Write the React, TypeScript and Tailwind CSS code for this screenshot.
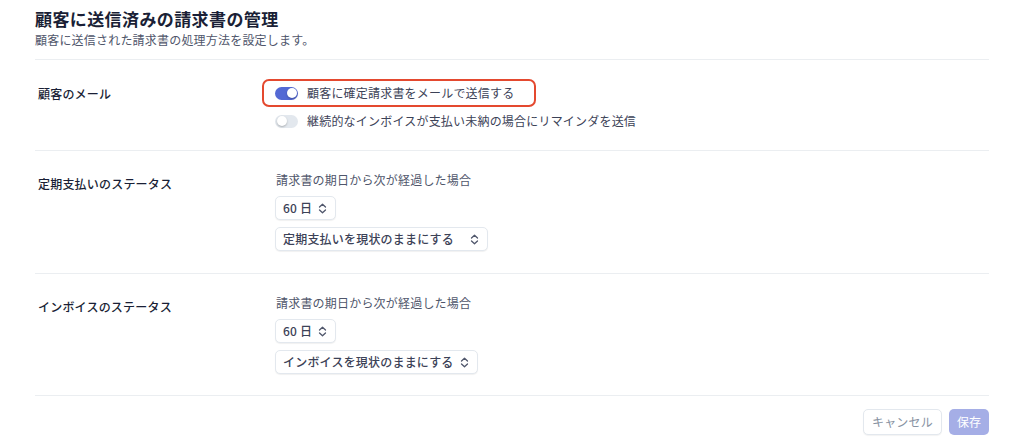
import React from "react";

const font = { fontFamily: '"Noto Sans CJK JP", "Noto Sans", sans-serif' };

function UpDown() {
  return (
    <svg width="9" height="11" viewBox="0 0 9 11" fill="none" className="shrink-0">
      <path d="M1.5 4 L4.5 1.2 L7.5 4" stroke="#4f566b" strokeWidth="1.3" strokeLinecap="round" strokeLinejoin="round" />
      <path d="M1.5 7 L4.5 9.8 L7.5 7" stroke="#4f566b" strokeWidth="1.3" strokeLinecap="round" strokeLinejoin="round" />
    </svg>
  );
}

function Select({ label, wide }: { label: string; wide?: string }) {
  return (
    <div
      className={`flex h-[24px] items-center justify-between gap-[6px] rounded-[5px] border border-[#e3e8ee] bg-white pl-[7px] pr-[8px] text-[12px] font-medium tracking-[0.2px] text-[#3c4257] shadow-[0_1px_1px_rgba(0,0,0,0.06)] ${
        wide ? wide : "w-fit"
      }`}
    >
      <span>{label}</span>
      <UpDown />
    </div>
  );
}

function Toggle({ on }: { on: boolean }) {
  return (
    <div
      className={`relative h-[13px] w-[23px] shrink-0 rounded-full ${
        on ? "bg-[#5469d4]" : "bg-[#e3e8ee]"
      }`}
    >
      <div
        className={`absolute top-[1.5px] h-[10px] w-[10px] rounded-full bg-white shadow-[0_1px_2px_rgba(0,0,0,0.25)] ${
          on ? "right-[1.5px]" : "left-[1.5px]"
        }`}
      />
    </div>
  );
}

function StatusRow({
  label,
  action,
  wide,
  pad,
}: {
  label: string;
  action: string;
  wide?: string;
  pad: string;
}) {
  return (
    <div className={`flex border-b border-[#ebeef1] ${pad}`}>
      <div className="w-[240px] pl-[3px] pt-[3px] text-[12px] font-medium tracking-[0.2px] text-[#1a1f36]">{label}</div>
      <div className="flex flex-col">
        <div className="pl-[1px] text-[12px] leading-[16px] tracking-[0.2px] text-[#4f566b]">請求書の期日から次が経過した場合</div>
        <div className="mt-[8px]">
          <Select label="60 日" />
        </div>
        <div className="mt-[7px]">
          <Select label={action} wide={wide} />
        </div>
      </div>
    </div>
  );
}

export default function App() {
  return (
    <div className="min-h-[446px] bg-white px-[35px] pt-[7px]" style={font}>
      <div className="border-b border-[#ebeef1] pb-[10px]">
        <h1 className="text-[17px] font-bold leading-[24px] tracking-[0.4px] text-[#1a1f36]">顧客に送信済みの請求書の管理</h1>
        <p className="text-[12px] leading-[18px] tracking-[0.2px] text-[#4f566b]">顧客に送信された請求書の処理方法を設定します。</p>
      </div>

      <div className="flex border-b border-[#ebeef1] pt-[19px] pb-[21px]">
        <div className="w-[240px] pl-[3px] pt-[6px] text-[12px] font-medium tracking-[0.2px] text-[#1a1f36]">顧客のメール</div>
        <div className="flex flex-col">
          <div className="ml-[-13px] flex h-[28px] w-fit items-center gap-[9px] rounded-[7px] border-2 border-[#e4492f] pl-[11px] pr-[20px] text-[12px] tracking-[0.2px] text-[#3c4257]">
            <Toggle on />
            <span>顧客に確定請求書をメールで送信する</span>
          </div>
          <div className="mt-[6px] flex h-[16px] items-center gap-[9px] text-[12px] tracking-[0.2px] text-[#3c4257]">
            <Toggle on={false} />
            <span>継続的なインボイスが支払い未納の場合にリマインダを送信</span>
          </div>
        </div>
      </div>

      <StatusRow label="定期支払いのステータス" action="定期支払いを現状のままにする" wide="w-[213px]" pad="pt-[21px] pb-[22px]" />
      <StatusRow label="インボイスのステータス" action="インボイスを現状のままにする" pad="pt-[21px] pb-[21px]" />

      <div className="flex justify-end gap-[7px] pt-[13px]">
        <button className="h-[26px] rounded-[5px] border border-[#e3e8ee] bg-white px-[8px] text-[12px] tracking-[0.2px] text-[#8792a2] shadow-[0_1px_1px_rgba(0,0,0,0.05)]">
          キャンセル
        </button>
        <button className="h-[26px] rounded-[5px] bg-[#a5aee6] px-[8px] text-[12px] text-white">保存</button>
      </div>
    </div>
  );
}
